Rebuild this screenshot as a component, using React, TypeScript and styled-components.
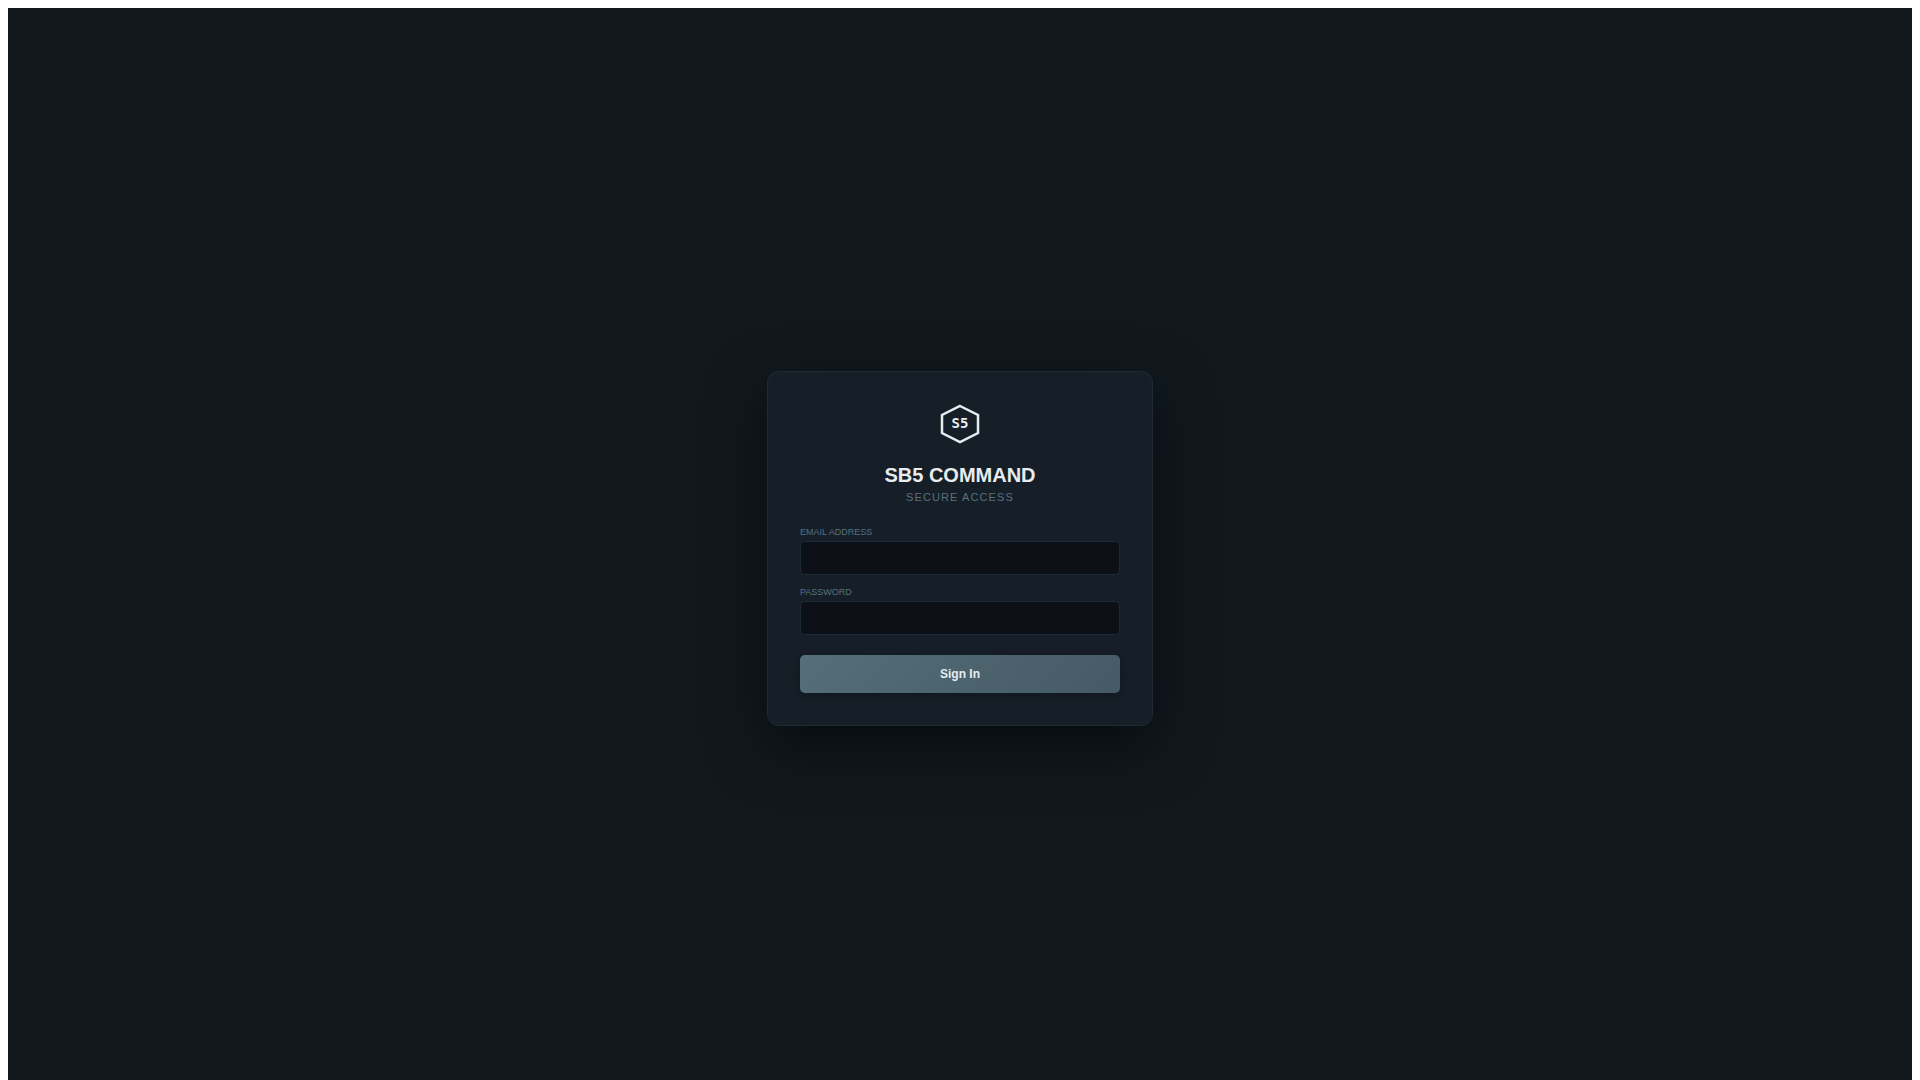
import React from 'react';
import styled, { createGlobalStyle } from 'styled-components';

const GlobalStyle = createGlobalStyle`
  body {
    margin: 8px;
    background: #ffffff;
    font-family: "Liberation Sans", Arial, sans-serif;
  }
`;

const Page = styled.main`
  display: flex;
  align-items: center;
  justify-content: center;
  min-height: 100vh;
  background: #11191f;
`;

const Card = styled.section`
  box-sizing: border-box;
  width: 100%;
  max-width: 386px;
  padding: 32px;
  border: 1px solid #1e2b36;
  border-radius: 12px;
  background: #161e27;
  box-shadow: 0 20px 60px rgba(0, 0, 0, 0.6);
`;

const Header = styled.header`
  display: flex;
  flex-direction: column;
  align-items: center;
  margin-bottom: 24px;
`;

const Logo = styled.svg`
  width: 40px;
  height: 40px;
  margin-bottom: 20px;
`;

const LogoText = styled.text`
  font-family: "DejaVu Sans Mono", monospace;
  font-size: 14px;
  font-weight: 700;
`;

const Title = styled.h1`
  margin: 0 0 4px;
  color: #e8ecef;
  font-size: 20px;
  line-height: 23px;
  font-weight: 700;
`;

const Subtitle = styled.p`
  margin: 0;
  color: #56727f;
  font-size: 11px;
  line-height: 12px;
  letter-spacing: 0.1em;
  text-transform: uppercase;
`;

const Form = styled.form`
  display: flex;
  flex-direction: column;
  gap: 12px;
`;

const Field = styled.div`
  display: flex;
  flex-direction: column;
  gap: 4px;
`;

const Label = styled.label`
  color: #56727f;
  font-size: 9px;
  line-height: 10px;
  text-transform: uppercase;
`;

const Input = styled.input`
  box-sizing: border-box;
  width: 100%;
  height: 34px;
  padding: 8px 12px;
  border: 1px solid #1e2b36;
  border-radius: 5px;
  background: #0d1017;
  color: #e8ecef;
  font-family: inherit;
  font-size: 13px;
  outline: none;

  &:focus {
    border-color: #56727f;
  }
`;

const SubmitButton = styled.button`
  margin-top: 8px;
  padding: 12px;
  border: none;
  border-radius: 5px;
  background: linear-gradient(135deg, #546e7a, #455a64);
  box-shadow: 0 2px 8px rgba(0, 0, 0, 0.3);
  color: #e8ecef;
  font-family: inherit;
  font-size: 12px;
  line-height: 14px;
  font-weight: 700;
  cursor: pointer;
`;

export default function App() {
  return (
    <>
      <GlobalStyle />
      <Page>
        <Card>
          <Header>
            <Logo viewBox="0 0 40 40" fill="none" aria-hidden="true">
              <path d="M20 2L38 11V29L20 38L2 29V11Z" stroke="#e8ecef" strokeWidth="2.5" />
              <LogoText x="20" y="24" textAnchor="middle" fill="#e8ecef">
                S5
              </LogoText>
            </Logo>
            <Title>SB5 COMMAND</Title>
            <Subtitle>Secure Access</Subtitle>
          </Header>
          <Form onSubmit={(event: React.FormEvent) => event.preventDefault()}>
            <Field>
              <Label htmlFor="email">Email Address</Label>
              <Input id="email" type="email" autoComplete="email" />
            </Field>
            <Field>
              <Label htmlFor="password">Password</Label>
              <Input id="password" type="password" autoComplete="current-password" />
            </Field>
            <SubmitButton type="submit">Sign In</SubmitButton>
          </Form>
        </Card>
      </Page>
    </>
  );
}
